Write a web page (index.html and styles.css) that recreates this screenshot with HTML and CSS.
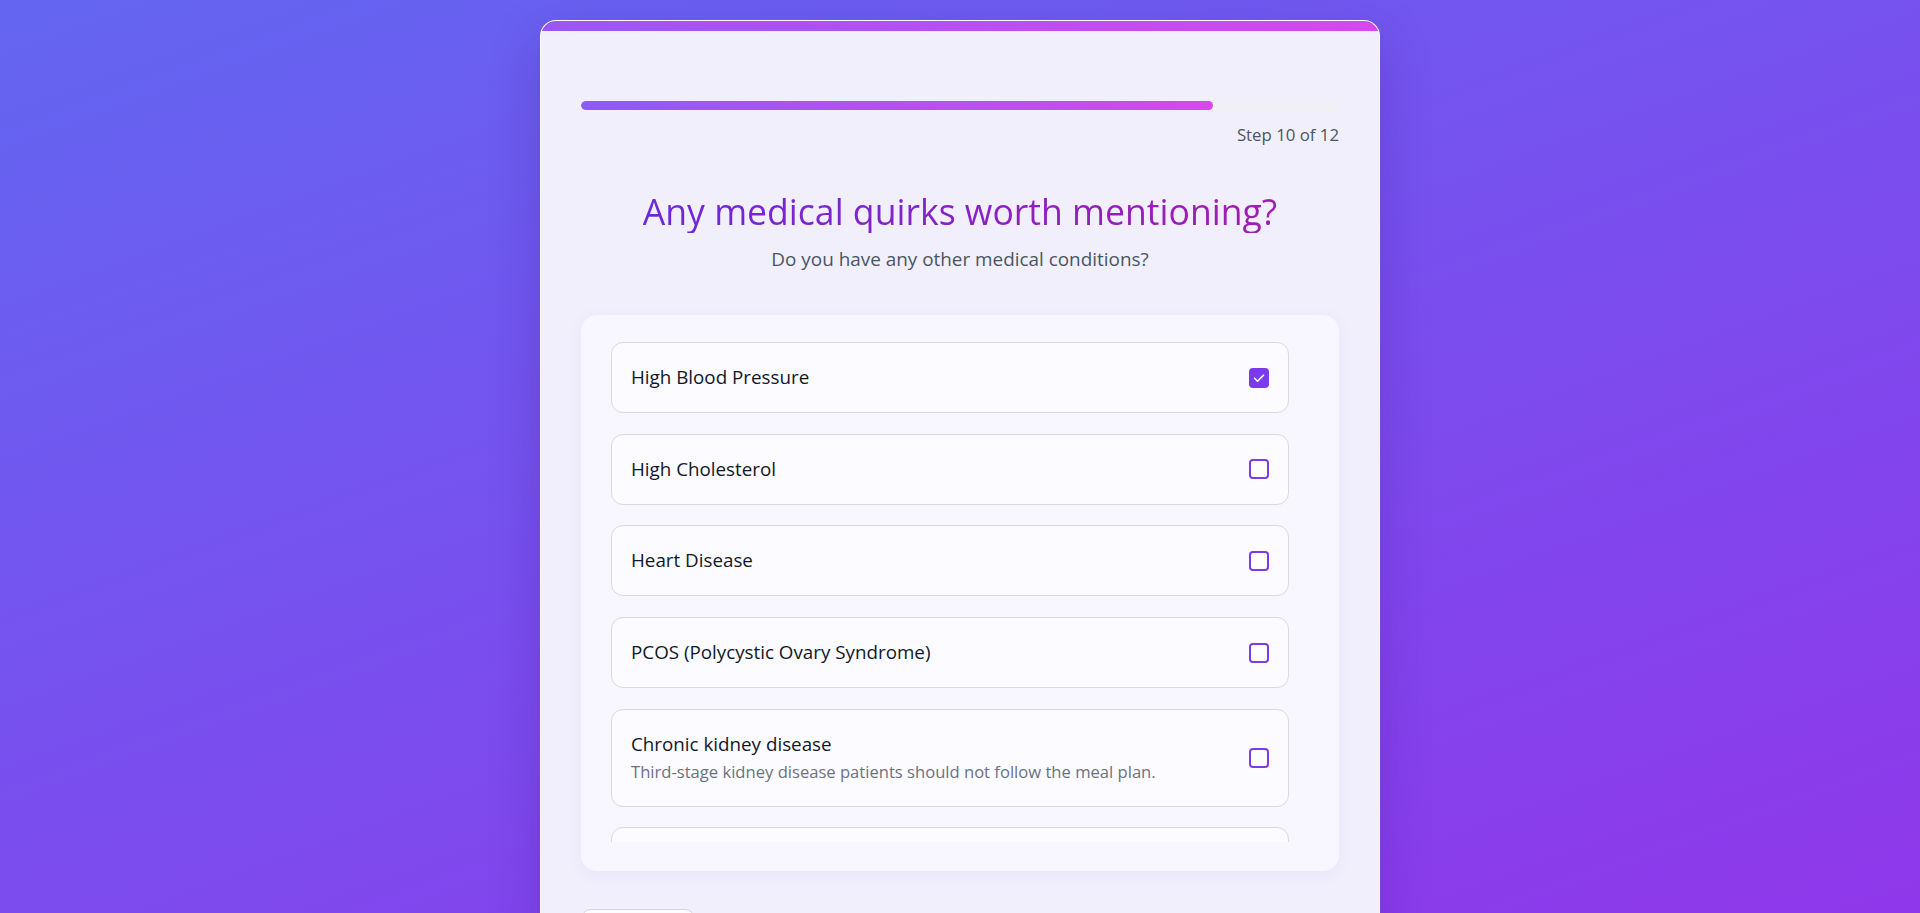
FILE: index.html
```
<!DOCTYPE html>
<html lang="en">
<head>
<meta charset="utf-8">
<title>Medical conditions</title>
<link rel="stylesheet" href="styles.css">
</head>
<body>
<main class="card">
  <div class="card-accent"></div>
  <div class="progress">
    <div class="progress-track"><div class="progress-fill" style="width: 83.333%"></div></div>
    <div class="progress-label">Step 10 of 12</div>
  </div>
  <h1 class="title">Any medical quirks worth mentioning?</h1>
  <p class="subtitle">Do you have any other medical conditions?</p>
  <section class="panel">
    <div class="options">
      <label class="option">
        <span class="option-text"><span class="option-name">High Blood Pressure</span></span>
        <span class="check checked"><svg viewBox="0 0 20 20" width="20" height="20"><path d="M5.5 10.2l3 3 6-6" fill="none" stroke="#fff" stroke-width="1.6" stroke-linecap="round" stroke-linejoin="round"/></svg></span>
      </label>
      <label class="option">
        <span class="option-text"><span class="option-name">High Cholesterol</span></span>
        <span class="check"></span>
      </label>
      <label class="option">
        <span class="option-text"><span class="option-name">Heart Disease</span></span>
        <span class="check"></span>
      </label>
      <label class="option">
        <span class="option-text"><span class="option-name">PCOS (Polycystic Ovary Syndrome)</span></span>
        <span class="check"></span>
      </label>
      <label class="option">
        <span class="option-text"><span class="option-name">Chronic kidney disease</span><span class="option-desc">Third-stage kidney disease patients should not follow the meal plan.</span></span>
        <span class="check"></span>
      </label>
      <label class="option">
        <span class="option-text"><span class="option-name">Diabetes</span></span>
        <span class="check"></span>
      </label>
    </div>
  </section>
  <div class="actions">
    <button class="btn-back" type="button">Back</button>
  </div>
</main>
</body>
</html>
```
FILE: styles.css
```
* { box-sizing: border-box; }
html, body { margin: 0; }
body {
  min-height: 100vh;
  background: linear-gradient(160deg, #6366f1 0%, #9333ea 100%);
  padding: 20px 0 40px;
  font-family: "Open Sans", "Noto Sans", sans-serif;
  color: #111827;
}
.card {
  width: 840px;
  margin: 0 auto;
  background: #f1effc;
  border: 1px solid rgba(255,255,255,0.7);
  border-radius: 16px;
  overflow: hidden;
  padding: 0 40px 60px;
  box-shadow: 0 20px 50px rgba(60, 20, 140, 0.25);
}
.card-accent {
  height: 10px;
  margin: 0 -40px;
  background: linear-gradient(90deg, #9a56f6, #d946ef);
}
.progress { margin-top: 70px; }
.progress-track {
  height: 9px;
  border-radius: 5px;
  background: #f1f1f5;
  overflow: hidden;
}
.progress-fill {
  height: 100%;
  border-radius: 5px;
  background: linear-gradient(90deg, #8b5cf6, #d946ef);
}
.progress-label {
  margin-top: 14px;
  text-align: right;
  font-size: 16.8px;
  line-height: 22px;
  color: #4b5563;
}
.title {
  margin: 43px auto 0;
  text-align: center;
  font-size: 35.6px;
  line-height: 44px;
  font-weight: 400;
  background: linear-gradient(90deg, #6d28d9, #a21caf);
  -webkit-background-clip: text;
  background-clip: text;
  color: transparent;
  width: max-content;
}
.subtitle {
  margin: 13px 0 0;
  text-align: center;
  font-size: 18.9px;
  line-height: 26px;
  color: #4b5563;
}
.panel {
  margin-top: 43px;
  background: #f8f6fe;
  border-radius: 16px;
  padding: 27px 50px 29px 30px;
  box-shadow: 0 4px 18px rgba(110, 80, 200, 0.06);
}
.options {
  height: 500px;
  overflow: hidden;
  display: flex;
  flex-direction: column;
  gap: 20.7px;
}
.option {
  flex: none;
  display: flex;
  align-items: center;
  justify-content: space-between;
  gap: 16px;
  padding: 22px 19px 22px 19px;
  background: #fcfbff;
  border: 1px solid #dcd6e6;
  border-radius: 12px;
}
.option-text { display: flex; flex-direction: column; }
.option-name { font-size: 18.8px; line-height: 25px; color: #111827; }
.option-desc { margin-top: 3px; font-size: 16.6px; line-height: 24px; color: #6b7280; }
.check {
  flex: none;
  width: 20px;
  height: 20px;
  border: 2px solid #7c3aed;
  border-radius: 4px;
  background: #fff;
  display: flex;
}
.check svg { margin: -2px; }
.check.checked { background: #7c3aed; }
.actions { margin-top: 38px; display: flex; }
.btn-back {
  width: 114px;
  height: 46px;
  border: 1px solid #d8d0e6;
  border-radius: 10px;
  background: #fcfbff;
  font-family: inherit;
  font-size: 16px;
  color: #4b5563;
}
```
